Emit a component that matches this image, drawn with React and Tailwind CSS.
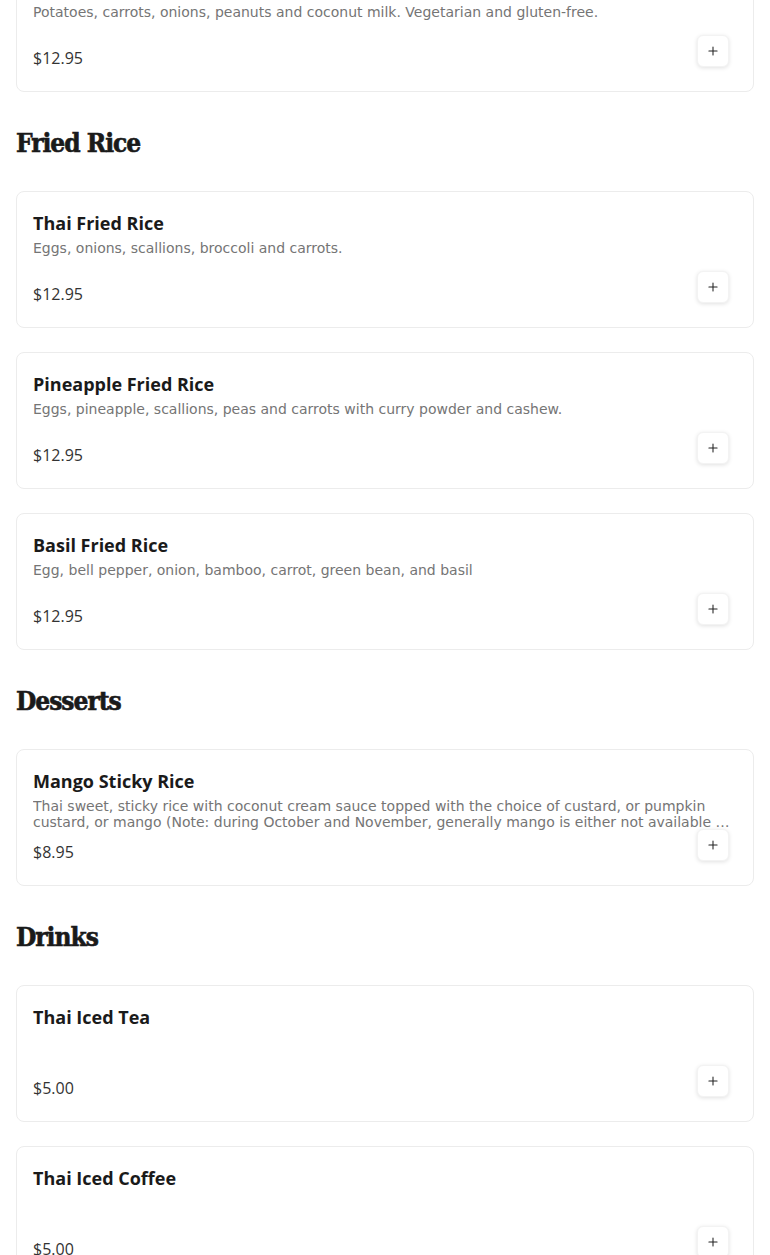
import { Plus } from "lucide-react";

// menu data
const sections = [
  {
    name: null,
    items: [
      {
        name: "Massaman Curry",
        desc: "Potatoes, carrots, onions, peanuts and coconut milk. Vegetarian and gluten-free.",
        price: "$12.95",
      },
    ],
  },
  {
    name: "Fried Rice",
    items: [
      {
        name: "Thai Fried Rice",
        desc: "Eggs, onions, scallions, broccoli and carrots.",
        price: "$12.95",
      },
      {
        name: "Pineapple Fried Rice",
        desc: "Eggs, pineapple, scallions, peas and carrots with curry powder and cashew.",
        price: "$12.95",
      },
      {
        name: "Basil Fried Rice",
        desc: "Egg, bell pepper, onion, bamboo, carrot, green bean, and basil",
        price: "$12.95",
      },
    ],
  },
  {
    name: "Desserts",
    items: [
      {
        name: "Mango Sticky Rice",
        desc: "Thai sweet, sticky rice with coconut cream sauce topped with the choice of custard, or pumpkin custard, or mango (Note: during October and November, generally mango is either not available or not in season, so we recommend custard or pumpkin custard).",
        price: "$8.95",
      },
    ],
  },
  {
    name: "Drinks",
    items: [
      { name: "Thai Iced Tea", desc: "", price: "$5.00" },
      { name: "Thai Iced Coffee", desc: "", price: "$5.00" },
    ],
  },
];

const bodyFont = { fontFamily: '"Open Sans", "Liberation Sans", sans-serif' };
const descFont = { fontFamily: '"DejaVu Sans", "Open Sans", sans-serif' };
const headFont = { fontFamily: '"DejaVu Serif Condensed", "DejaVu Serif", serif' };

const MenuCard = ({ item }) => {
  return (
    <div className="bg-white border border-[#ececec] rounded-lg px-4 pt-[17px] pb-[21px]">
      <h3 className="text-[18px] leading-7 font-bold text-[#1a1a1a]">
        {item.name}
      </h3>
      <p
        className="mt-[3px] h-8 text-[14px] leading-4 text-[#757575] line-clamp-2"
        style={descFont}
      >
        {item.desc}
      </p>
      <div className="mt-[10px] h-6 flex items-end justify-between">
        <span className="text-[16px] leading-6 text-[#333333]">
          {item.price}
        </span>
        <button className="mb-[3px] mr-2 shrink-0 w-8 h-8 flex items-center justify-center bg-white rounded-md border border-[#f3f3f3] shadow-[0_1px_4px_rgba(0,0,0,0.12)]">
          <Plus size={14} strokeWidth={1.8} color="#222" />
        </button>
      </div>
    </div>
  );
};

export default function App() {
  return (
    <div className="bg-white overflow-hidden h-[1255px]" style={bodyFont}>
      <div className="px-4 -mt-[45px]">
        {sections.map((section, i) => (
          <div key={i}>
            {section.name && (
              <h2
                className="mt-[33px] mb-[30px] text-[26px] leading-9 font-bold tracking-[-1px] text-[#1a1a1a] [-webkit-text-stroke:0.6px_#1a1a1a]"
                style={headFont}
              >
                {section.name}
              </h2>
            )}
            <div className="flex flex-col gap-6">
              {section.items.map((item) => (
                <MenuCard key={item.name} item={item} />
              ))}
            </div>
          </div>
        ))}
      </div>
    </div>
  );
}
